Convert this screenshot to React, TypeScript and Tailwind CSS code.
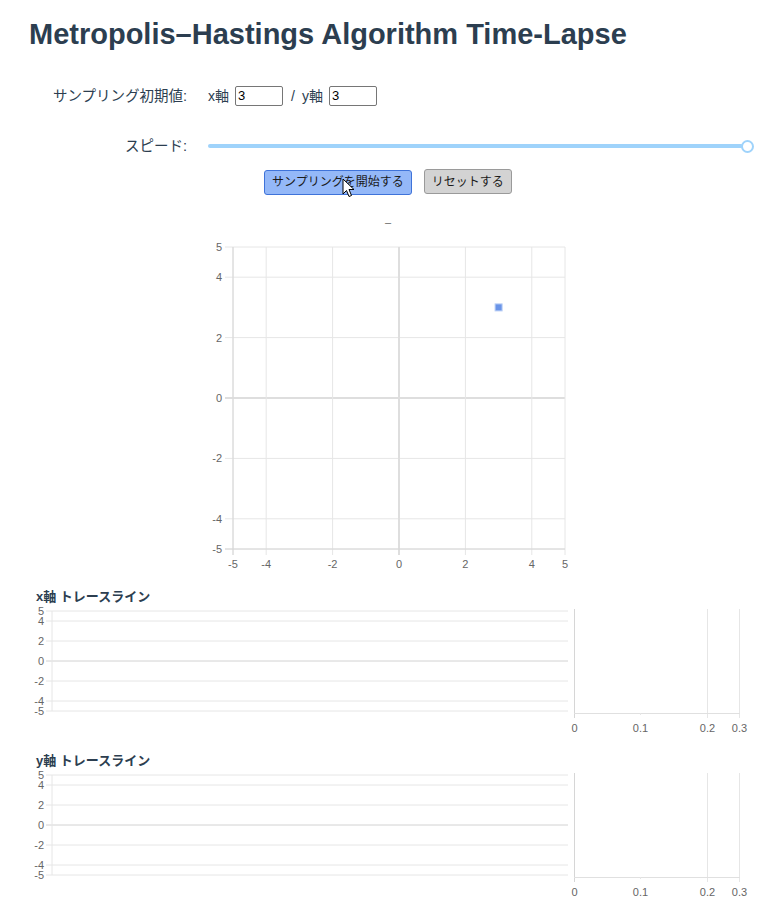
import React from "react";

const FONT = "font-['Liberation_Sans','Noto_Sans_CJK_JP',sans-serif]";

// scatter axis helpers
const sx = (v: number) => 43 + (v + 5) * 33.2;
const sy = (v: number) => 35 + (5 - v) * 30.2;

function ScatterChart() {
  const ticks = [-5, -4, -2, 0, 2, 4, 5];
  return (
    <svg width={390} height={366} className="block">
      <text x={198} y={14} fontSize={11} fill="#666" textAnchor="middle">
        –
      </text>
      {ticks.map((t) => (
        <g key={`h${t}`}>
          <line
            x1={35}
            x2={375}
            y1={sy(t)}
            y2={sy(t)}
            stroke={t === 0 ? "#dedede" : "#e6e6e6"}
            strokeWidth={t === 0 ? 2 : 1}
          />
          <text x={32} y={sy(t) + 4} fontSize={11} fill="#666" textAnchor="end">
            {t}
          </text>
        </g>
      ))}
      {ticks.map((t) => (
        <g key={`v${t}`}>
          <line
            x1={sx(t)}
            x2={sx(t)}
            y1={35}
            y2={343}
            stroke={t === 0 ? "#dedede" : "#e6e6e6"}
            strokeWidth={t === 0 ? 2 : 1}
          />
          <text x={sx(t)} y={356} fontSize={11} fill="#666" textAnchor="middle">
            {t}
          </text>
        </g>
      ))}
      <line x1={43} x2={43} y1={35} y2={343} stroke="#d6d6d6" />
      <line x1={35} x2={375} y1={337} y2={337} stroke="#d6d6d6" />
      <rect x={sx(3) - 3.5} y={sy(3) - 3.5} width={7} height={7} fill="#6a94e8" stroke="#b8cdf5" strokeWidth={1} />
    </svg>
  );
}

function TraceChart({ title }: { title: string }) {
  const ty = (v: number) => 6 + (5 - v) * 10;
  const ticks = [5, 4, 2, 0, -2, -4, -5];
  const hist = [
    { v: "0", x: 574.5 },
    { v: "0.1", x: 640.5 },
    { v: "0.2", x: 707.5 },
    { v: "0.3", x: 739.5 },
  ];
  return (
    <div>
      <div className="pl-[36px] text-[13px] font-bold leading-4 text-[#2c3e50]">{title}</div>
      <svg width={774} height={130} className="block">
        {ticks.map((t) => (
          <g key={t}>
            <line
              x1={46}
              x2={568}
              y1={ty(t)}
              y2={ty(t)}
              stroke={t === 0 ? "#d2d2d2" : "#e6e6e6"}
            />
            <text x={44} y={ty(t) + 4} fontSize={11} fill="#666" textAnchor="end">
              {t}
            </text>
          </g>
        ))}
        <line x1={52} x2={52} y1={6} y2={106} stroke="#e6e6e6" />
        {/* histogram side */}
        <line x1={574.5} x2={574.5} y1={4} y2={113} stroke="#d6d6d6" />
        <line x1={707.5} x2={707.5} y1={4} y2={113} stroke="#e6e6e6" />
        <line x1={739.5} x2={739.5} y1={4} y2={113} stroke="#e6e6e6" />
        <line x1={574} x2={740} y1={108.5} y2={108.5} stroke="#e0e0e0" />
        <line x1={640.5} x2={640.5} y1={108} y2={110} stroke="#e6e6e6" />
        {hist.map((h) => (
          <text key={h.v} x={h.x} y={127} fontSize={11} fill="#666" textAnchor="middle">
            {h.v}
          </text>
        ))}
      </svg>
    </div>
  );
}

function Cursor() {
  return (
    <svg width={14} height={21} viewBox="0 0 14 21" className="absolute left-[78px] top-[9px]">
      <path
        d="M1 1 L1 16 L4.5 12.5 L7 18.5 L9.5 17.5 L7 11.5 L12 11.5 Z"
        fill="#fff"
        stroke="#000"
        strokeWidth={1}
        strokeLinejoin="round"
      />
    </svg>
  );
}

export default function App() {
  return (
    <div className={`${FONT} w-[774px] bg-white text-[#2c3e50]`}>
      <h1 className="pl-[29px] pt-[17px] text-[29px] font-bold leading-[34px] text-[#2c3e50]">
        Metropolis–Hastings Algorithm Time-Lapse
      </h1>

      <div className="mt-[35px] flex items-center">
        <div className="w-[187px] text-right text-[14.5px] leading-5">サンプリング初期値:</div>
        <div className="ml-[21px] flex items-center text-[14px] leading-5">
          <span>x軸</span>
          <input
            defaultValue="3"
            className="ml-[6px] h-[20px] w-[48px] rounded-[2px] border border-[#767676] px-[2px] text-[13px] text-black"
          />
          <span className="ml-[8px]">/</span>
          <span className="ml-[7px]">y軸</span>
          <input
            defaultValue="3"
            className="ml-[6px] h-[20px] w-[48px] rounded-[2px] border border-[#767676] px-[2px] text-[13px] text-black"
          />
        </div>
      </div>

      <div className="mt-[30px] flex items-center">
        <div className="w-[187px] text-right text-[14.5px] leading-5">スピード:</div>
        <div className="ml-[21px] flex w-[546px] items-center">
          <div className="h-[4px] flex-1 rounded-full bg-[#9fd3fb]" />
          <div className="-ml-[2px] h-[13px] w-[13px] rounded-full border-2 border-[#9fd3fb] bg-white" />
        </div>
      </div>

      <div className="mt-[13px] flex pl-[264px]">
        <div className="relative">
          <button className="h-[25px] rounded-[3px] border border-[#3f73d9] bg-[#94b8f8] px-[7px] text-[12px] text-[#1a1a1a]">
            サンプリングを開始する
          </button>
          <Cursor />
        </div>
        <button className="ml-[12px] h-[25px] rounded-[3px] border border-[#9a9a9a] bg-[#d3d3d3] px-[7px] text-[12px] text-[#1a1a1a]">
          リセットする
        </button>
      </div>

      <div className="mt-[17px] pl-[190px]">
        <ScatterChart />
      </div>

      <div className="mt-[11px]">
        <TraceChart title="x軸 トレースライン" />
      </div>
      <div className="mt-[18px]">
        <TraceChart title="y軸 トレースライン" />
      </div>
    </div>
  );
}
